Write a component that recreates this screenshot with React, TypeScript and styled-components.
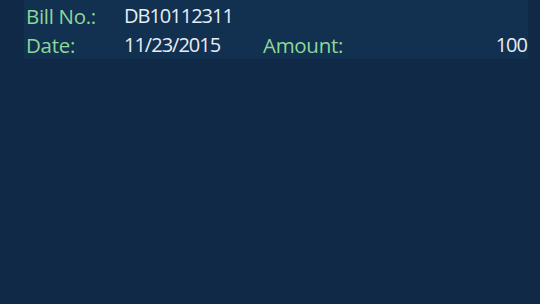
import React from "react";
import styled, { createGlobalStyle } from "styled-components";

const Global = createGlobalStyle`
  html, body { margin: 0; padding: 0; background: #0f2947; }
  body { width: 540px; height: 304px; overflow: hidden; }
`;

const Page = styled.div`
  width: 540px;
  height: 304px;
  background: #0f2947;
  padding-left: 24px;
  box-sizing: border-box;
`;

const Card = styled.div`
  width: 504px;
  background: #12304f;
  box-sizing: border-box;
  padding: 1px 1px 0 2px;
  display: grid;
  grid-template-columns: 98px 139px 1fr auto;
  grid-auto-rows: 29px;
  align-items: center;
  font-family: "Open Sans", "Noto Sans", sans-serif;
`;

const Label = styled.span`
  color: #8ed79a;
  font-size: 20.5px;
  letter-spacing: -0.3px;
`;

const Value = styled.span<{ $right?: boolean }>`
  color: #e6edf5;
  font-size: 20px;
  letter-spacing: -1px;
  text-align: ${(p) => (p.$right ? "right" : "left")};
`;

export default function App() {
  return (
    <>
      <Global />
      <Page>
        <Card>
          <Label>Bill No.:</Label>
          <Value>DB10112311</Value>
          <span />
          <span />
          <Label>Date:</Label>
          <Value>11/23/2015</Value>
          <Label>Amount:</Label>
          <Value $right>100</Value>
        </Card>
      </Page>
    </>
  );
}
